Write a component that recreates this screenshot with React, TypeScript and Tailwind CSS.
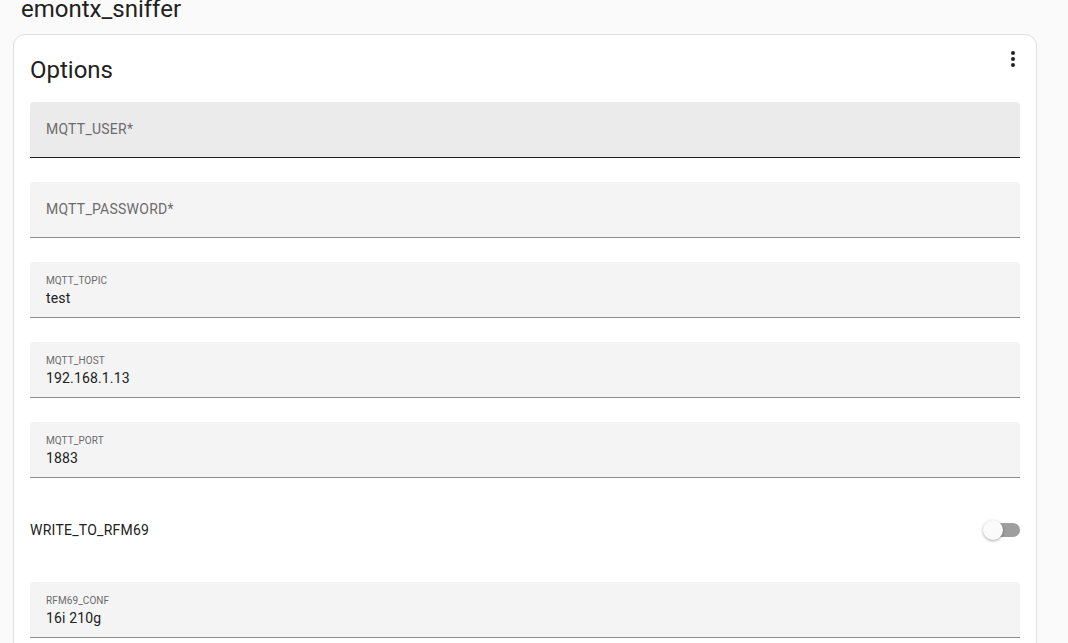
import { ReactNode } from "react";

type Field = {
  label: string;
  value?: string;
  required?: boolean;
  hovered?: boolean;
};

const fields: Field[] = [
  { label: "MQTT_USER", required: true, hovered: true },
  { label: "MQTT_PASSWORD", required: true },
  { label: "MQTT_TOPIC", value: "test" },
  { label: "MQTT_HOST", value: "192.168.1.13" },
  { label: "MQTT_PORT", value: "1883" },
];

function TextField({ field }: { field: Field }) {
  const bg = field.hovered ? "bg-[#ebebeb] border-[#1f1f1f]" : "bg-[#f4f4f4] border-[#8c8c8c]";
  return (
    <div className={`h-14 rounded-t border-b px-4 ${bg}`}>
      {field.value === undefined ? (
        <div className="flex h-full items-center text-[14px] tracking-[0.25px] text-[#6b6b6b]">
          {field.label}
          {field.required && "*"}
        </div>
      ) : (
        <div className="flex flex-col pt-[12px]">
          <span className="text-[10px] leading-[14px] tracking-[0.1px] text-[#6b6b6b]">{field.label}</span>
          <span className="text-[14px] leading-[20px] tracking-[0.15px] text-[#212121]">{field.value}</span>
        </div>
      )}
    </div>
  );
}

function Switch() {
  return (
    <div className="relative flex h-5 w-[37px] items-center">
      <div className="ml-[3px] h-[14px] w-[34px] rounded-full bg-[#9e9e9e]" />
      <div className="absolute left-0 top-0 h-5 w-5 rounded-full bg-[#fafafa] shadow-[0_1px_3px_rgba(0,0,0,0.35)]" />
    </div>
  );
}

function Card({ children }: { children: ReactNode }) {
  return (
    <div className="relative ml-[13px] w-[1024px] rounded-xl border border-[#e0e0e0] bg-white px-4 pb-6 pt-5">
      {children}
    </div>
  );
}

export default function App() {
  return (
    <div className="h-[643px] overflow-hidden bg-[#fafafa] font-['Roboto',sans-serif] text-[#212121]">
      <h1 className="-mt-[7px] pl-[21px] text-[24px] font-normal leading-[32px]">emontx_sniffer</h1>
      <div className="mt-[9px]">
        <Card>
          <button className="absolute right-[11px] top-[12px] flex h-6 w-6 items-center justify-center text-[#212121]">
            <svg viewBox="0 0 24 24" className="h-6 w-6" fill="currentColor">
              <path d="M12,16A2,2 0 0,1 14,18A2,2 0 0,1 12,20A2,2 0 0,1 10,18A2,2 0 0,1 12,16M12,10A2,2 0 0,1 14,12A2,2 0 0,1 12,14A2,2 0 0,1 10,12A2,2 0 0,1 12,10M12,4A2,2 0 0,1 14,6A2,2 0 0,1 12,8A2,2 0 0,1 10,6A2,2 0 0,1 12,4Z" />
            </svg>
          </button>
          <h2 className="-mt-px text-[24px] font-normal leading-[32px]">Options</h2>
          <div className="mt-[16px] flex flex-col gap-6">
            {fields.map((f) => (
              <TextField field={f} key={f.label} />
            ))}
            <div className="flex h-14 items-center justify-between">
              <span className="text-[14px] tracking-[0.25px]">WRITE_TO_RFM69</span>
              <Switch />
            </div>
            <TextField field={{ label: "RFM69_CONF", value: "16i 210g" }} />
          </div>
        </Card>
      </div>
    </div>
  );
}
